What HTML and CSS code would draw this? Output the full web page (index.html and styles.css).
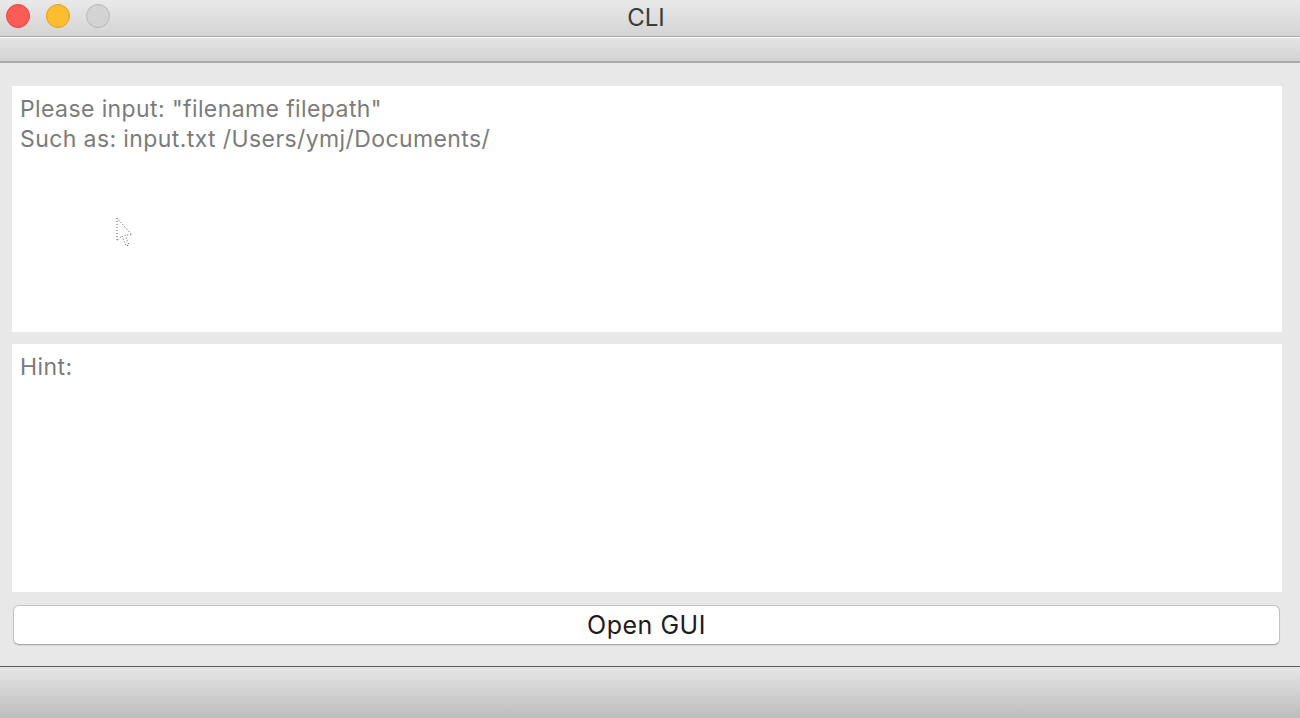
FILE: index.html
```html
<!DOCTYPE html>
<html>
<head>
<meta charset="utf-8">
<title>CLI</title>
<link rel="stylesheet" href="styles.css">
</head>
<body>
<div class="window">
  <div class="titlebar">
    <div class="lights">
      <span class="light red"></span>
      <span class="light yellow"></span>
      <span class="light gray"></span>
    </div>
    <div class="title">CLI</div>
  </div>
  <div class="toolbar"></div>
  <div class="content">
    <div class="area area-top">
      <div class="line">Please input: "filename filepath"</div>
      <div class="line">Such as: input.txt /Users/ymj/Documents/</div>
      <svg class="cursor" width="20" height="32" viewBox="0 0 20 32">
        <path d="M1 1 L1 24 L6 19 L10 29 L13 28 L9 18 L16 18 Z" fill="#fff" stroke="#555" stroke-width="1" stroke-dasharray="1 2"/>
      </svg>
    </div>
    <div class="area area-bottom">
      <div class="line">Hint:</div>
    </div>
    <button class="btn">Open GUI</button>
  </div>
  <div class="statusbar"></div>
</div>
</body>
</html>
```
FILE: styles.css
```css
html, body {
  margin: 0;
  padding: 0;
  width: 1300px;
  height: 718px;
  overflow: hidden;
  font-family: Inter, "Liberation Sans", Arial, sans-serif;
}
.window {
  display: flex;
  flex-direction: column;
  width: 1300px;
  height: 718px;
  background: #e8e8e8;
}
.titlebar {
  height: 36px;
  border-bottom: 1px solid #acacac;
  background: linear-gradient(#e9e9e9, #d4d4d4);
  display: flex;
  align-items: center;
  position: relative;
}
.lights {
  display: flex;
  gap: 16px;
  padding-left: 6px;
  margin-top: -4px;
}
.light {
  width: 24px;
  height: 24px;
  border-radius: 50%;
  box-sizing: border-box;
}
.red { background: #fd5b57; border: 1px solid #e4463f; }
.yellow { background: #febd2f; border: 1px solid #e0a124; }
.gray { background: #d3d3d3; border: 1px solid #b8b8b8; }
.title {
  position: absolute;
  left: 0;
  right: 8px;
  top: 3px;
  text-align: center;
  font-family: Inter, "Liberation Sans", Arial, sans-serif;
  font-size: 24px;
  color: #3b3b3b;
}
.toolbar {
  height: 23px;
  border-top: 1px solid #fafafa;
  border-bottom: 2px solid #a9a9a9;
  background: linear-gradient(#e4e4e4, #d2d2d2);
}
.content {
  flex: 1;
  display: flex;
  flex-direction: column;
  padding: 23px 18px 0 12px;
  border-bottom: 1px solid #5a5a5a;
}
.area {
  background: #fff;
  padding: 8px 8px;
  box-sizing: border-box;
  position: relative;
}
.area-top { height: 246px; }
.area-bottom { height: 248px; margin-top: 12px; }
.line {
  font-size: 23px;
  letter-spacing: 0.4px;
  line-height: 30px;
  color: #7b7b7b;
}
.cursor {
  position: absolute;
  left: 104px;
  top: 131px;
}
.btn {
  margin: 13px 2px 0 1px;
  height: 40px;
  background: #fff;
  border: 1px solid #c3c3c3;
  border-bottom-color: #a9a9a9;
  border-radius: 6px;
  font-family: Inter, "Liberation Sans", Arial, sans-serif;
  font-size: 25px;
  letter-spacing: 0.5px;
  color: #1c1c1c;
  box-shadow: 0 1px 1px rgba(0,0,0,0.08);
  padding: 0;
}
.statusbar {
  height: 51px;
  background: linear-gradient(#e6e6e6, #bdbdbd);
}
```
